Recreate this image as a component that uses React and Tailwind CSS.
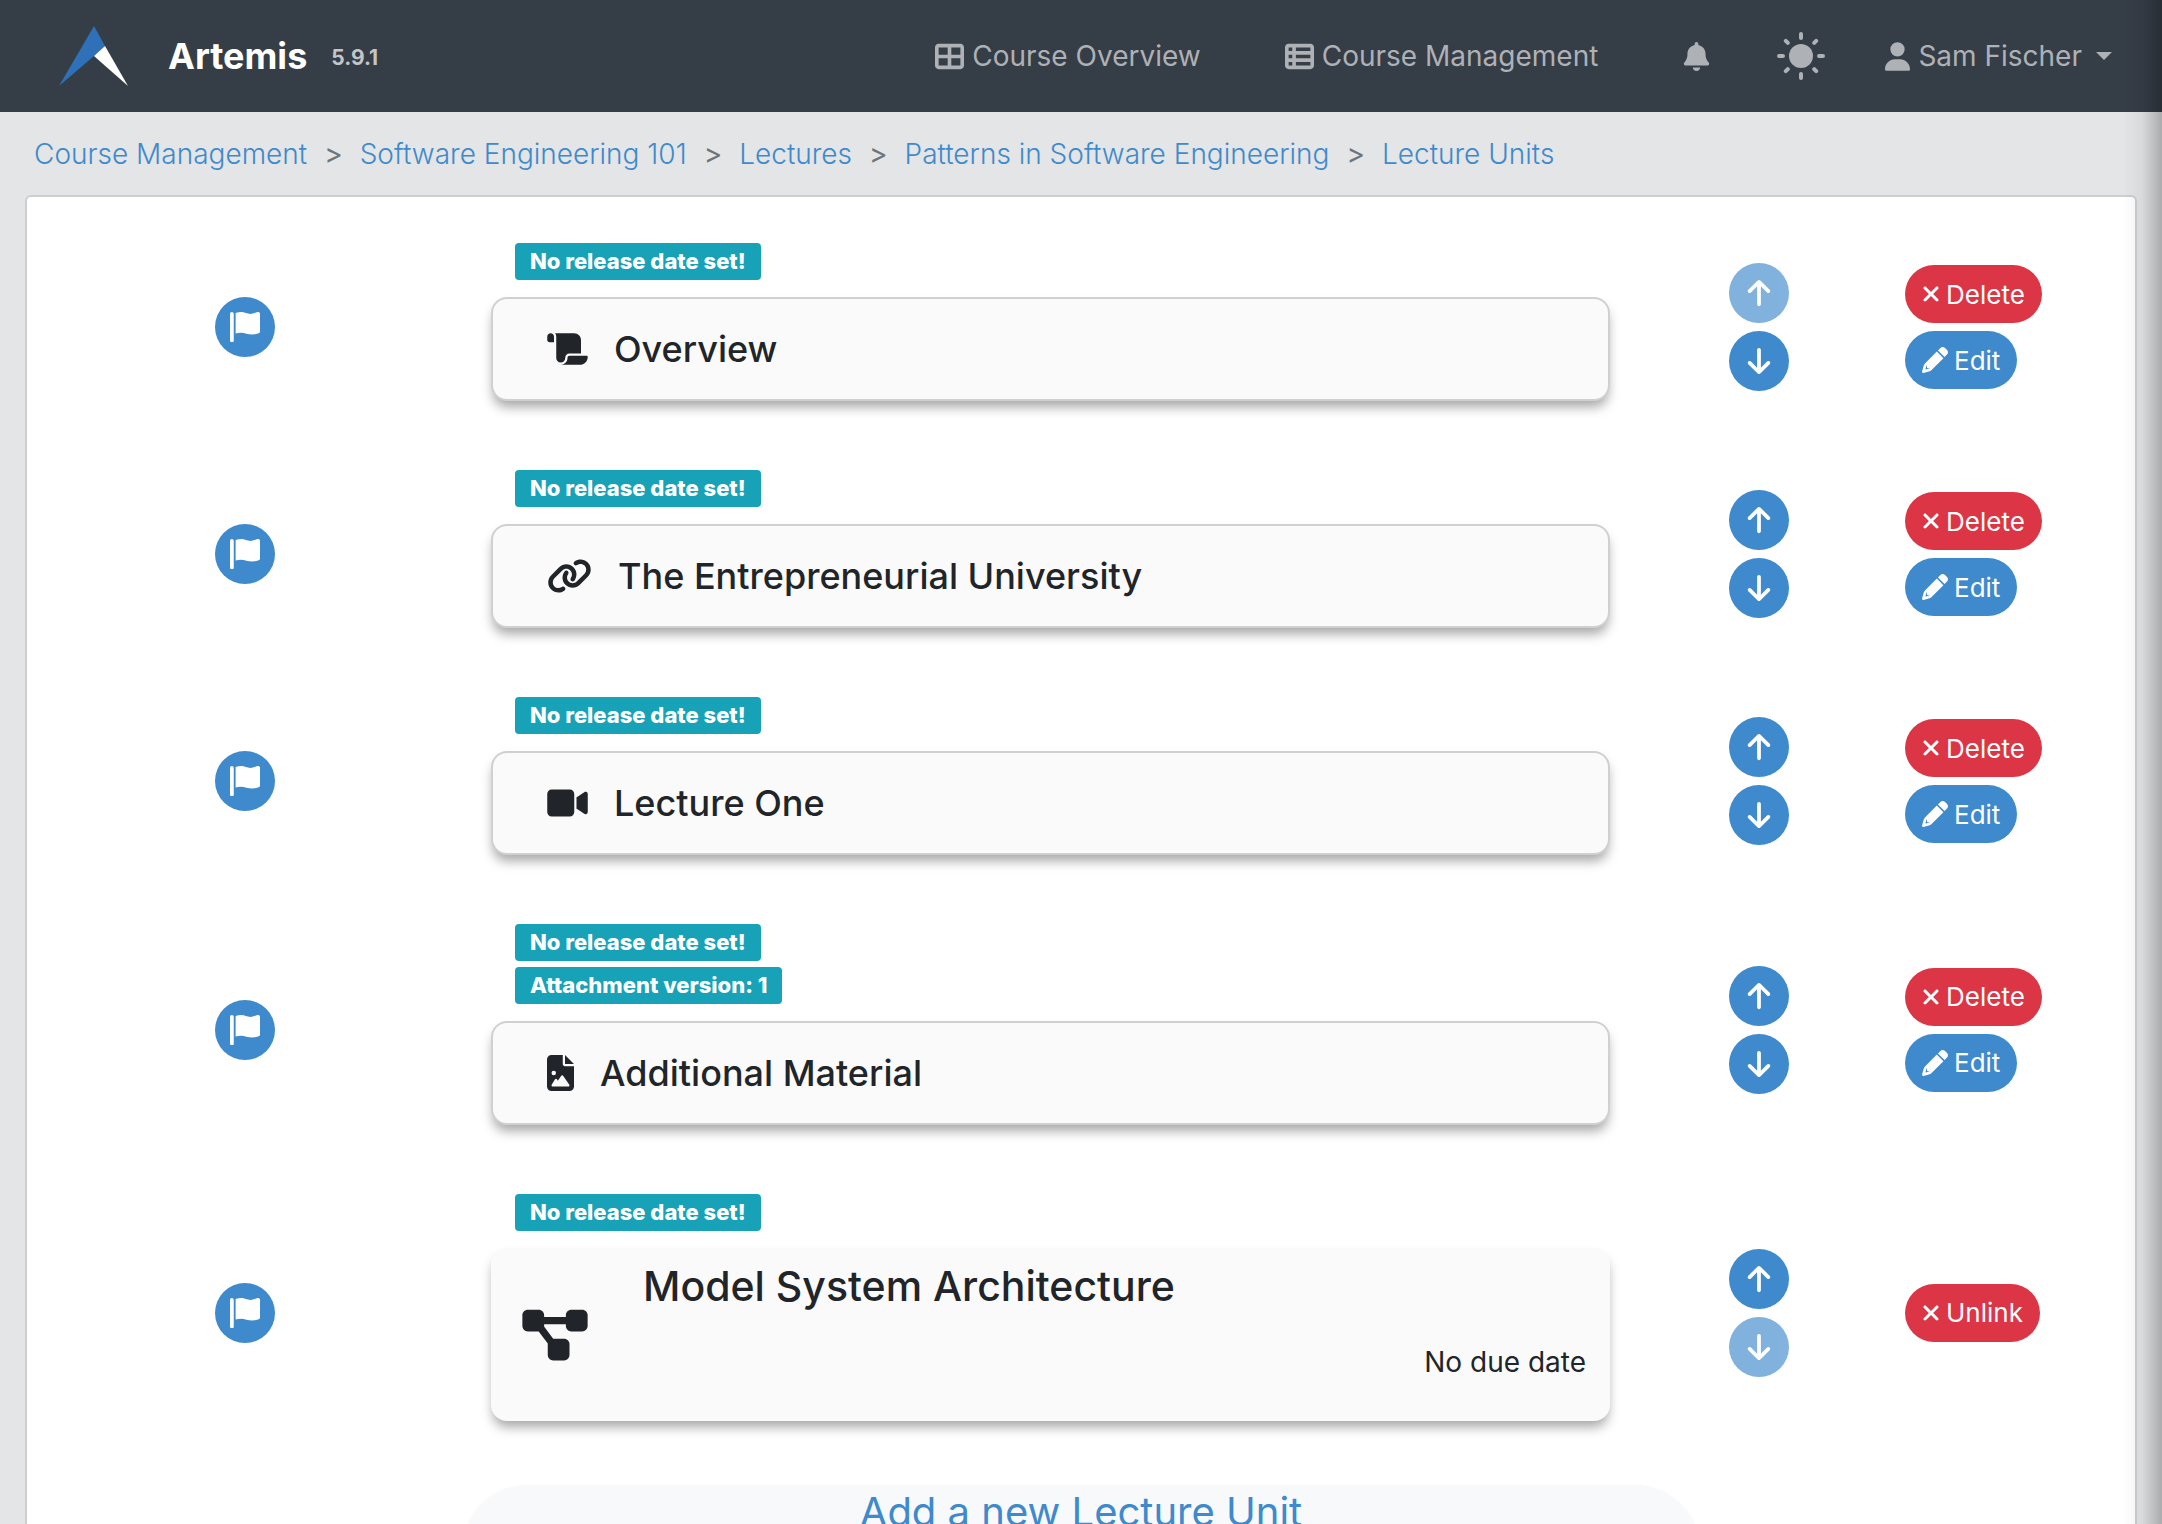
import React from "react";
import {
  FaArrowDown,
  FaArrowUp,
  FaBell,
  FaDiagramProject,
  FaFileImage,
  FaLink,
  FaScroll,
  FaTableCellsLarge,
  FaTableList,
  FaUser,
  FaVideo,
  FaXmark,
} from "react-icons/fa6";

const crumbs = [
  "Course Management",
  "Software Engineering 101",
  "Lectures",
  "Patterns in Software Engineering",
  "Lecture Units",
];

const units = [
  {
    title: "Overview",
    Icon: FaScroll,
    iconWidth: "w-[41px]",
    badges: ["No release date set!"],
    first: true,
  },
  {
    title: "The Entrepreneurial University",
    Icon: FaLink,
    iconWidth: "w-[45px]",
    badges: ["No release date set!"],
  },
  {
    title: "Lecture One",
    Icon: FaVideo,
    iconWidth: "w-[41px]",
    badges: ["No release date set!"],
  },
  {
    title: "Additional Material",
    Icon: FaFileImage,
    iconWidth: "w-[27px]",
    badges: ["No release date set!", "Attachment version: 1"],
  },
  {
    title: "Model System Architecture",
    Icon: FaDiagramProject,
    iconWidth: "w-[66px]",
    badges: ["No release date set!"],
    exercise: true,
    last: true,
  },
];

function Logo() {
  return (
    <svg viewBox="0 0 70 60" className="h-[60px] w-[70px]" aria-hidden="true">
      <path d="M35 0 L46 20 L35 30 L0 60 Z" fill="#2f71b8" />
      <path d="M46 20 L69 60 L35 30 Z" fill="#fff" />
    </svg>
  );
}

function SunIcon() {
  return (
    <svg
      viewBox="0 0 48 48"
      className="size-12"
      fill="currentColor"
      stroke="currentColor"
      strokeWidth="4"
      strokeLinecap="round"
      aria-hidden="true"
    >
      <circle cx="24" cy="24" r="12" stroke="none" />
      <path d="M24 2v4M24 42v4M2 24h4M42 24h4M8.8 8.8l2 2M37.2 37.2l2 2M8.8 39.2l2-2M37.2 10.8l2-2" />
    </svg>
  );
}

function FlagIcon() {
  return (
    <svg viewBox="0 0 512 512" className="size-[30px]" fill="currentColor" aria-hidden="true">
      <path d="M64 496C64 504.8 56.75 512 48 512h-32C7.25 512 0 504.8 0 496V32c0-17.75 14.25-32 32-32s32 14.25 32 32V496zM476.3 0c-6.365 0-13.01 1.35-19.34 4.233c-45.69 20.86-79.56 27.94-107.8 27.94c-59.96 0-94.81-31.86-163.9-31.87C160.9 .3055 131.6 4.867 96 15.75v350.5c32-9.984 59.87-14.1 84.85-14.1c73.63 0 124.9 31.78 198.6 31.78c31.91 0 68.02-5.971 111.1-23.09C504.1 355.9 512 344.4 512 332.1V30.73C512 11.1 495.3 0 476.3 0z" />
    </svg>
  );
}

function PencilIcon({ className }) {
  return (
    <svg viewBox="0 0 512 512" className={className} fill="currentColor" aria-hidden="true">
      <path d="M421.7 220.3L188.5 453.4C178.1 463.8 165.2 471.5 151.1 475.6L30.77 511C22.35 513.5 13.24 511.2 7.03 504.1C.82 498.8-1.5 489.7 .98 481.2L36.37 360.9C40.53 346.8 48.16 333.9 58.57 323.5L291.7 90.34L421.7 220.3zM96 354L88 364L68 440L72 444L146 424L158 416H112C103.2 416 96 408.8 96 400V354z" fillRule="evenodd" />
      <path d="M492.7 58.75C517.7 83.74 517.7 124.3 492.7 149.3L444.3 197.7L314.3 67.72L362.7 19.32C387.7-5.678 428.3-5.678 453.3 19.32L492.7 58.75z" />
    </svg>
  );
}

function Navbar() {
  return (
    <header className="flex h-28 shrink-0 items-center bg-[#353d47] pr-[50px] pl-[59px] text-[28px] text-[#aeb1b5]">
      <a href="#home" className="flex items-center">
        <Logo />
        <span className="ml-[39px] text-[36px] font-bold text-white">Artemis</span>
        <span className="mt-1 ml-6 text-[21px] font-bold text-[#c3c5c7]">5.9.1</span>
      </a>
      <nav className="ml-auto flex items-center">
        <a href="#courses" className="flex items-center gap-2">
          <FaTableCellsLarge className="size-[29px]" />
          Course Overview
        </a>
        <a href="#management" className="ml-[84px] flex items-center gap-2">
          <FaTableList className="size-[29px]" />
          Course Management
        </a>
        <button type="button" aria-label="Notifications" className="ml-[84px]">
          <FaBell className="size-[29px]" />
        </button>
        <button type="button" aria-label="Switch theme" className="ml-[66px]">
          <SunIcon />
        </button>
        <button type="button" className="ml-[60px] flex items-center gap-2">
          <FaUser className="h-[29px] w-[25px]" />
          Sam Fischer
          <svg viewBox="0 0 16 8" className="ml-[6px] h-2 w-4" fill="currentColor" aria-hidden="true">
            <path d="M0 0h16l-8 8z" />
          </svg>
        </button>
      </nav>
    </header>
  );
}

function Breadcrumb() {
  return (
    <nav aria-label="Breadcrumb" className="px-[34px] pt-5 pb-[19px]">
      <ol className="flex items-center text-[28px] leading-[44px]">
        {crumbs.map((c, i) => (
          <li key={c} className="flex items-center">
            {i > 0 && <span className="px-[17px] text-[#6c757d]">&gt;</span>}
            <a href="#crumb" className="font-light text-[#3e8acc]">
              {c}
            </a>
          </li>
        ))}
      </ol>
    </nav>
  );
}

function Badge({ children }) {
  return (
    <span className="rounded bg-[#17a2b8] px-[15px] text-[22px] leading-[37px] font-extrabold text-white">
      {children}
    </span>
  );
}

function RoundButton({ label, disabled, children }) {
  return (
    <button
      type="button"
      aria-label={label}
      disabled={disabled}
      className="flex size-[60px] items-center justify-center rounded-full bg-[#3e8acc] text-white disabled:opacity-65"
    >
      {children}
    </button>
  );
}

function PillButton({ icon, tone, label }) {
  return (
    <button
      type="button"
      className={`flex h-[58px] items-center gap-[6px] rounded-full px-[17px] text-[26px] text-white ${tone}`}
    >
      {icon}
      {label}
    </button>
  );
}

const cardShadow = "shadow-[0_8px_12px_-2px_rgba(0,0,0,0.35)]";

function UnitCard({ unit }) {
  const { Icon, title, iconWidth } = unit;
  if (unit.exercise) {
    return (
      <article
        className={`flex h-[173px] items-center rounded-2xl bg-[#fafafa] pr-6 pl-[31px] ${cardShadow}`}
      >
        <Icon className={`h-[58px] shrink-0 ${iconWidth}`} />
        <div className="ml-[55px] flex h-full flex-1 flex-col pt-3">
          <h3 className="text-[41px] leading-[52px] font-medium">{title}</h3>
          <p className="mt-7 text-right text-[28px] leading-[44px]">No due date</p>
        </div>
      </article>
    );
  }
  return (
    <article
      className={`flex h-[104px] items-center gap-[26px] rounded-2xl border-2 border-[#d0d0d0] bg-[#fafafa] px-[54px] ${cardShadow}`}
    >
      <Icon className={`h-9 shrink-0 ${iconWidth}`} />
      <h3 className="text-[36px] leading-[44px] font-medium">{title}</h3>
    </article>
  );
}

function UnitRow({ unit }) {
  return (
    <li className="grid grid-cols-[436fr_1175fr_242fr_255fr] items-center">
      <div className="flex justify-center">
        <RoundButton label="Competencies">
          <FlagIcon />
        </RoundButton>
      </div>
      <div className="px-7 pb-[10px]">
        <div className="mb-[17px] flex flex-col items-start gap-[6px] pl-6">
          {unit.badges.map((b) => (
            <Badge key={b}>{b}</Badge>
          ))}
        </div>
        <UnitCard unit={unit} />
      </div>
      <div className="flex flex-col items-center gap-2">
        <RoundButton label="Move up" disabled={unit.first}>
          <FaArrowUp className="size-[30px]" />
        </RoundButton>
        <RoundButton label="Move down" disabled={unit.last}>
          <FaArrowDown className="size-[30px]" />
        </RoundButton>
      </div>
      <div className="flex flex-col items-start gap-2 pl-[25px]">
        <PillButton
          icon={<FaXmark className="h-[26px] w-[18px]" />}
          tone="bg-[#dc3545]"
          label={unit.exercise ? "Unlink" : "Delete"}
        />
        {!unit.exercise && (
          <PillButton
            icon={<PencilIcon className="size-[26px]" />}
            tone="bg-[#3e8acc]"
            label="Edit"
          />
        )}
      </div>
    </li>
  );
}

export default function App() {
  return (
    <div className="relative flex h-screen flex-col overflow-hidden bg-[#e4e5e6] font-['Inter',sans-serif] text-[#212529]">
      <Navbar />
      <Breadcrumb />
      <main className="mx-[25px] shrink-0 rounded-md border-2 border-[#ccced0] bg-white pt-[46px] pb-12">
        <ul className="flex flex-col gap-[59px]">
          {units.map((u) => (
            <UnitRow key={u.title} unit={u} />
          ))}
        </ul>
        <section className="mx-auto mt-[54px] w-[1236px] max-w-full rounded-[64px] bg-[#f8f9fb] pb-20 text-center shadow-[0_2px_4px_rgba(0,0,0,0.06)]">
          <h2 className="text-[40px] leading-[54px] text-[#3e8acc]">Add a new Lecture Unit</h2>
        </section>
      </main>
      <div
        className="pointer-events-none absolute inset-y-0 right-0 w-10 bg-linear-to-r from-black/0 via-black/5 to-black/25"
        aria-hidden="true"
      />
    </div>
  );
}
